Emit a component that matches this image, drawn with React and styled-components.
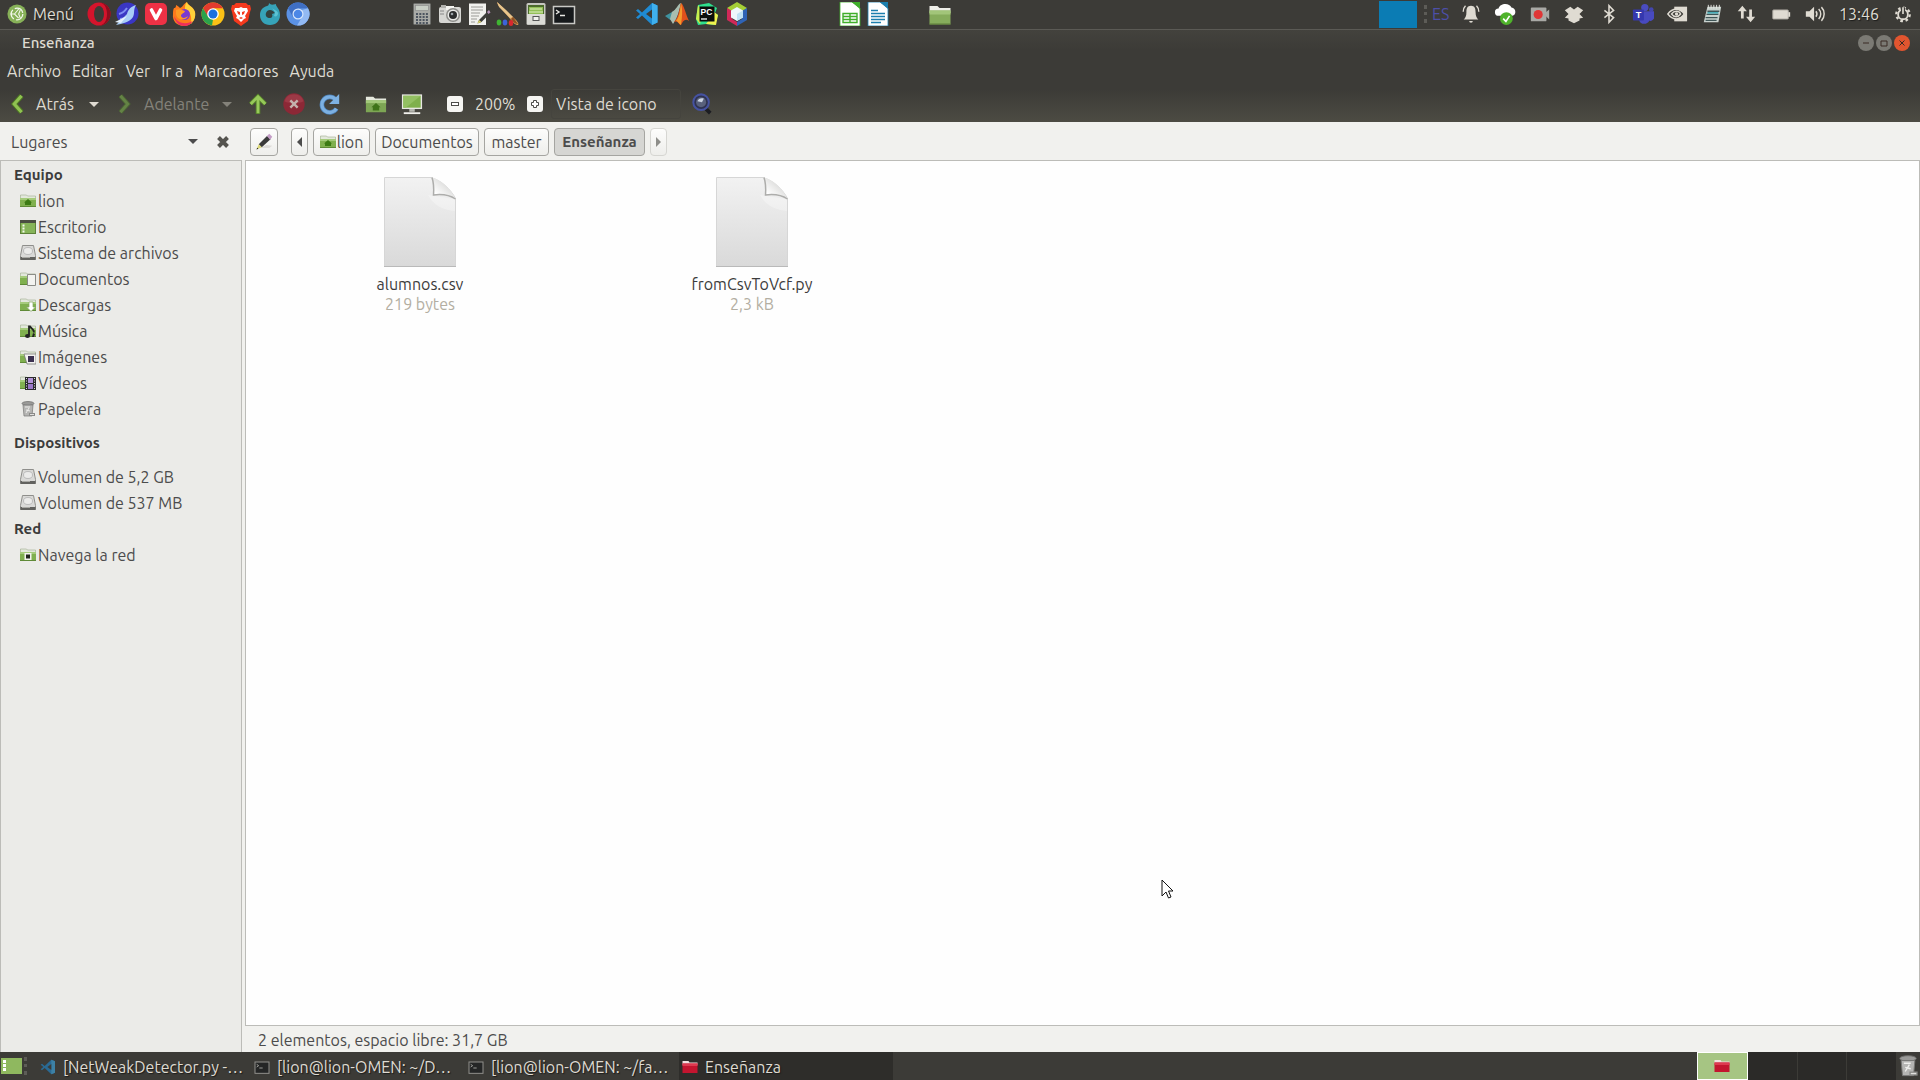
// App.jsx 파일 관리자 (Caja) 화면
import React from 'react'
import styled, { createGlobalStyle } from 'styled-components'

//icons: 상단 패널
const Opera = () => (
  <svg viewBox="0 0 24 24">
    <circle cx="12" cy="12" r="11.5" fill="#d4142c" />
    <path d="M12 .5a11.500 11.500 0 0 1 0 23c5 0 8-5 8-11.500S17 .5 12 .5z" fill="#8e0d1e" />
    <ellipse cx="12" cy="12" rx="5" ry="8" fill="#3c3b37" />
  </svg>
)
const SeaMonkey = () => (
  <svg viewBox="0 0 24 24">
    <circle cx="12.500" cy="11.500" r="11" fill="#3a36c4" />
    <path d="M4 12c4-1 6-3 8-6M5 17c5 0 9-3 12-8" stroke="#7f8df2" strokeWidth="2" fill="none" />
    <path d="M21 3c-4 1-8 4-9 9L1 23c6-1 14-3 17-8 2-4 0-7 3-12z" fill="#a9cdf6" />
    <path d="M0 20l12-6-6 7z" fill="#e4f0fd" />
  </svg>
)
const Vivaldi = () => (
  <svg viewBox="0 0 24 24">
    <rect x="1" y="1" width="22" height="22" rx="5" fill="#ee3145" />
    <path d="M7.500 8l4.500 8.500L16.500 8" stroke="#fff" strokeWidth="3.600" fill="none" strokeLinecap="round" strokeLinejoin="round" />
  </svg>
)
const Firefox = () => (
  <svg viewBox="0 0 24 24">
    <path d="M2 6c1 0 2 0 2-3 2 1 3 2 4 3 3-1 3-4 7-6 0 3 6 4 8 10 1 8-4 14-11 14S0 19 1 12c0-2 0-4 1-6z" fill="#ff7a1c" />
    <path d="M15 0c0 3 6 4 8 10 1 5-1 9-4 12 1-8-1-13-6-15 0-3 0-5 2-7z" fill="#ffd23a" />
    <path d="M2 14c1 6 5 10 10 10 4 0 7-2 9-5-5 3-15 4-19-5z" fill="#f0305a" />
    <circle cx="12.500" cy="12.500" r="5.500" fill="#7a3ad0" />
    <path d="M4 8c4-2 6 0 9 1-1 3-4 2-4 5 1 3 5 2 7 0-1 5-11 5-12-2z" fill="#ff9a24" />
  </svg>
)
const Chrome = () => (
  <svg viewBox="0 0 24 24">
    <circle cx="12" cy="12" r="11.500" fill="#fbc116" />
    <path d="M2 6.300A11.500 11.500 0 0 1 22 6.300H12L7 15z" fill="#e33b2e" />
    <path d="M2 6.300L7.300 15l4.700 2.500L11 23.500A11.500 11.500 0 0 1 2 6.300z" fill="#2ba24c" />
    <circle cx="12" cy="12" r="5.800" fill="#fff" />
    <circle cx="12" cy="12" r="4.500" fill="#1b6fe0" />
  </svg>
)
const Brave = () => (
  <svg viewBox="0 0 24 24">
    <path d="M7 1h10l2 2 2 0 1 4-1 3-2 9-7 5-7-5-2-9-1-3 1-4h2z" fill="#f5391d" />
    <path d="M6 6l4 0 2-1 2 1 4 0 1 3-3 5 1 2-2 1-3 3-3-3-2-1 1-2-3-5z" fill="#fff" />
    <path d="M8 9l3 1v3l-2-1zM16 9l-3 1v3l2-1zM10 16l2-1 2 1-2 1z" fill="#f5391d" />
  </svg>
)
const Waterfox = () => (
  <svg viewBox="0 0 24 24">
    <path d="M11 1c2 2 3 2 7 1-1 2 4 4 4 11 0 6-4 10-10 10S2 19 2 13c0-5 3-8 7-9 1 0 2-1 2-3z" fill="#36a3b8" />
    <path d="M8 11c1-3 4-4 7-2l2 2-3 1c1 2 0 4-2 4-3 0-5-2-4-5z" fill="#33423f" />
    <path d="M14 6c2 2 5 2 6 5 0 3-2 4-4 3l1-3c0-2-2-3-3-5z" fill="#5cc3d3" />
  </svg>
)
const Chromium = () => (
  <svg viewBox="0 0 24 24">
    <circle cx="12" cy="12" r="11.500" fill="#5b92e5" />
    <path d="M2 6.300A11.500 11.500 0 0 1 22 6.300H12L7 15z" fill="#3f6fc4" />
    <path d="M22 6.300A11.500 11.500 0 0 1 11 23.500l5-8.500V8z" fill="#92b9f3" />
    <circle cx="12" cy="12" r="5.500" fill="#d8e6fb" />
    <circle cx="12" cy="12" r="4.300" fill="#4c87e6" />
  </svg>
)
const Calculator = () => (
  <svg viewBox="0 0 24 24">
    <rect x="3.500" y="1.500" width="17" height="21" rx="1" fill="#a9aaa6" stroke="#6b6c69" />
    <rect x="5.500" y="3.500" width="13" height="5" fill="#c9cfc6" stroke="#888" strokeWidth=".6" />
    <path d="M6 12h12M6 15h12M6 18h12M6 21h12" stroke="#4d5560" strokeWidth="2" strokeDasharray="2 1.300" />
  </svg>
)
const Camera = () => (
  <svg viewBox="0 0 24 24">
    <rect x="1" y="5" width="22" height="16" rx="2" fill="#d6d6d3" />
    <rect x="3" y="3" width="5" height="3" fill="#b1b1ad" />
    <rect x="8" y="4" width="8" height="4" fill="#f3f3f0" />
    <circle cx="15" cy="13" r="7" fill="#8c8c89" />
    <circle cx="15" cy="13" r="5.500" fill="#e9e9e7" />
    <circle cx="15" cy="13" r="4" fill="#2b2d2e" />
    <circle cx="14" cy="12" r="1.300" fill="#9aa2a8" />
    <path d="M2 9h4M2 12h4" stroke="#888" />
  </svg>
)
const NotePad = () => (
  <svg viewBox="0 0 24 24">
    <rect x="2" y="1.500" width="17" height="21.500" fill="#f1f1ee" />
    <path d="M4 5h12M4 8h12M4 11h9M4 14h8M4 17h6M4 20h4" stroke="#9a9a96" />
    <path d="M22 8l1.500 3-9 9-4 1.500L12 18z" fill="#3d3d3b" />
    <path d="M12 18l2.500 2-4 1.500z" fill="#d8d36a" />
    <path d="M22 8l1.500 2.500-2 1.500-1.500-2z" fill="#b493b8" />
  </svg>
)
const Colors = () => (
  <svg viewBox="0 0 24 24">
    <path d="M2 0l18 17c3 3 4 5 3 6-2 0-5-2-7-5L3 3z" fill="#d99a54" />
    <path d="M2 0l9 8 7 7-3 1L4 5z" fill="#e9c58c" />
    <path d="M18 15l5 7c-3 0-5-2-7-5z" fill="#8e5124" />
    <ellipse cx="4" cy="20.500" rx="2.300" ry="3" fill="#3fb531" />
    <ellipse cx="10" cy="20.500" rx="2.300" ry="3" fill="#3d63d8" />
    <ellipse cx="16" cy="21" rx="2.300" ry="3" fill="#d8282e" />
  </svg>
)
const Cabinet = () => (
  <svg viewBox="0 0 24 24">
    <rect x="2.500" y="1" width="19" height="22" rx="1.500" fill="#c6c6c0" />
    <rect x="4" y="3" width="16" height="9" fill="#4c6a2c" />
    <rect x="5" y="5" width="14" height="7" fill="#92bf56" />
    <path d="M6 7h12M5 10h14" stroke="#dff0c0" />
    <rect x="3" y="12" width="18" height="10" fill="#dcdcd6" />
    <rect x="9" y="14.500" width="6" height="4" fill="#f3f3ef" stroke="#555" />
  </svg>
)
const Terminal = () => (
  <svg viewBox="0 0 24 24">
    <rect x="1.500" y="4.500" width="21" height="17" fill="#16191b" stroke="#c9c9c5" strokeWidth="1.500" />
    <path d="M4 8l3 2-3 2M8 13.500h5" stroke="#e8e8e4" strokeWidth="1.400" fill="none" />
  </svg>
)
const VsCode = () => (
  <svg viewBox="0 0 24 24">
    <path d="M17 1l5.500 2.500v17L17 23 7 13.500 3 17l-2-1.500L5 12 1 8.500 3 7l4 3.500z" fill="#1f8ad2" />
    <path d="M17 1l5.500 2.500v17L17 23z" fill="#3fb0ee" />
    <path d="M17 7.500v9L11 12z" fill="#3c3b37" />
  </svg>
)
const Matlab = () => (
  <svg viewBox="0 0 24 24">
    <path d="M0 14l7-4 4-2-4 11-3-2z" fill="#3f93a0" />
    <path d="M7 10C11 8 13 2 16 1c-2 8-3 14-8 21l-3-5z" fill="#a8bdb0" />
    <path d="M16 1c3 2 5 12 8 18-4-3-6 0-8 4-3-1-3-5-7-3 5-5 5-12 7-19z" fill="#e0501c" />
    <path d="M16 1c2 7 1 15 0 22-2-1-3-4-5-4 4-5 4-12 5-18z" fill="#f59a2c" />
  </svg>
)
const PyCharm = () => (
  <svg viewBox="0 0 24 24">
    <path d="M3 3l11-2 8 5-2 5 3 2-3 10-9-1-8 1-2-6z" fill="#2fe08e" />
    <path d="M19 10l4 3-2 10-10-1 3-4z" fill="#f0f24e" />
    <path d="M3 3L1 17l4 5 3-12z" fill="#c9ee4d" />
    <rect x="4.500" y="4.500" width="15" height="15" fill="#0b0d0c" />
    <text x="5.500" y="12.500" fontSize="8.500" fontWeight="700" fontFamily="Liberation Sans, sans-serif" fill="#fff">PC</text>
    <path d="M6 17h6" stroke="#fff" strokeWidth="1.300" />
  </svg>
)
const NetBeans = () => (
  <svg viewBox="0 0 24 24">
    <path d="M12 0l10 6-4 3-6-3-6 3-4-3z" fill="#a4cf36" />
    <path d="M2 6l5 3v8l5 3v4L2 18z" fill="#d02858" />
    <path d="M22 6l-5 3v8l-5 3v4l10-6z" fill="#2f63b5" />
    <path d="M12 5l6 3.500v7L12 19l-6-3.500v-7z" fill="#eef7fb" />
    <path d="M12 12l6-3.500v7L12 19z" fill="#bfe2f5" />
  </svg>
)
const OfficeDoc = ({ color, sheet }) => (
  <svg viewBox="0 0 24 24">
    <path d="M2 0h12l8 6v18H2z" fill="#fff" stroke={color} strokeWidth=".8" />
    <path d="M14 0h8v7z" fill={color} />
    {sheet ? (
      <path d="M5 11.500h14v9H5zM5 14.500h14M5 17.500h14M12 11.500v9" stroke={color} strokeWidth="1.400" fill="none" />
    ) : (
      <path d="M5 8.500h7M5 11.500h14M5 14.500h14M5 17.500h14M5 20.500h10" stroke={color} strokeWidth="1.300" />
    )}
  </svg>
)
const PanelFolder = () => (
  <svg viewBox="0 0 24 24">
    <path d="M1.500 4h8l2 2h11v5h-21z" fill="#efefe9" />
    <path d="M1.500 8.500h21v14h-21z" fill="#86ac5c" />
    <path d="M1.500 8.500h21v4h-21z" fill="#a2c57a" />
    <path d="M1.500 21.500h21v1h-21z" fill="#5c7d38" />
  </svg>
)
const MateLogo = () => (
  <svg viewBox="0 0 24 24">
    <circle cx="12" cy="12" r="11.500" fill="#87b158" />
    <circle cx="12" cy="12" r="7" fill="none" stroke="#f4f8ee" strokeWidth="1.500" strokeDasharray="12 2.700" />
    <path d="M4 12h5l5 5M9 12l5-6M16 7l-2 5 2 5" stroke="#f4f8ee" strokeWidth="1.300" fill="none" />
  </svg>
)

//icons: 트레이
const Bell = () => (
  <svg viewBox="0 0 24 24" fill="#dfdbd2">
    <path d="M12 3c4 0 5 3 5 7 0 4 1 6 3 8H4c2-2 3-4 3-8 0-4 1-7 5-7z" />
    <path d="M10 19.500h4a2 2 0 0 1-4 0z" />
    <path d="M6 3C4 5 3.500 7 3.500 9.500M18 3c2 2 2.500 4 2.500 6.500" stroke="#dfdbd2" strokeWidth="1.500" fill="none" />
  </svg>
)
const Cloud = () => (
  <svg viewBox="0 0 24 24">
    <path d="M5 14a4 4 0 0 1 0-8c1-6 12-7 14-1 5 0 6 8 1 9z" fill="#fff" />
    <circle cx="13.500" cy="17" r="7" fill="#4fb32b" />
    <path d="M10 17l3 3 4-6" stroke="#fff" strokeWidth="1.800" fill="none" />
  </svg>
)
const Recorder = () => (
  <svg viewBox="0 0 24 24">
    <rect x="2" y="5" width="17" height="15" rx="1" fill="#a9a9a5" />
    <path d="M16 12l6-5v11z" fill="#a9a9a5" />
    <circle cx="10" cy="12.500" r="5" fill="#e03636" />
  </svg>
)
const Dropbox = () => (
  <svg viewBox="0 0 24 24" fill="#dfdbd2">
    <path d="M8 4l4 3 4-3 6 4-4 4 4 4-4 1v2l-6 3-6-3v-2l-4-1 4-4-4-4z" />
  </svg>
)
const Bluetooth = () => (
  <svg viewBox="0 0 24 24">
    <path d="M7 8l10 8-5 5V3l5 5-10 8" stroke="#dfdbd2" strokeWidth="1.700" fill="none" />
  </svg>
)
const Teams = () => (
  <svg viewBox="0 0 24 24">
    <circle cx="14" cy="5" r="4" fill="#4a4cc0" />
    <circle cx="21" cy="7" r="2.500" fill="#4346ae" />
    <path d="M8 9h16v8c-2 3-4 3-5 2-2 5-10 5-11 0z" fill="#484abf" />
    <rect x="1" y="7" width="12" height="12" rx="1" fill="#3538ae" />
    <text x="4" y="16.500" fontSize="10" fontWeight="700" fontFamily="Liberation Sans, sans-serif" fill="#fff">T</text>
  </svg>
)
const Nvidia = () => (
  <svg viewBox="0 0 24 24">
    <path d="M9 4h14v16H9z" fill="#dfdbd2" />
    <path d="M2 12c5-7 13-7 18 0-4 6-12 8-18 0z" fill="#3c3b37" stroke="#dfdbd2" strokeWidth="1.500" />
    <path d="M6 12c3-4 8-4 10 0-3 4-7 4-10 0z" fill="none" stroke="#dfdbd2" strokeWidth="1.500" />
    <circle cx="11.500" cy="12" r="1.800" fill="#dfdbd2" />
  </svg>
)
const Notes = () => (
  <svg viewBox="0 0 24 24">
    <path d="M7 4h15l-3 17H3z" fill="#c9d2ce" />
    <path d="M7 9h13M6 12.500h13M5 16h13M5 19h12" stroke="#3f5556" strokeWidth="1.400" />
    <path d="M7 10.700h12" stroke="#3ea9b6" strokeWidth="1.600" />
    <path d="M8 2v4M11 2v4M14 2v4M17 2v4M20 2v4" stroke="#e8e8e4" />
  </svg>
)
const NetArrows = () => (
  <svg viewBox="0 0 24 24" fill="#dfdbd2">
    <path d="M8 3l5 6H9.500v8h-3V9H3zM17 21l-5-6h3.500V7h3v8H22z" />
  </svg>
)
const Battery = () => (
  <svg viewBox="0 0 24 24">
    <rect x="3" y="7.500" width="17" height="10" rx="1" fill="#dfdbd2" stroke="#a5a29a" />
    <rect x="20" y="10" width="2" height="5" fill="#dfdbd2" />
  </svg>
)
const Sound = () => (
  <svg viewBox="0 0 24 24">
    <path d="M2 9h4l5-5v16l-5-5H2z" fill="#dfdbd2" />
    <path d="M13 9c1.500 2 1.500 4 0 6M16 6.500c3 3 3 8 0 11M19 4.500c4 4 4 11 0 15" stroke="#dfdbd2" strokeWidth="1.600" fill="none" />
  </svg>
)
const Gear = () => (
  <svg viewBox="0 0 24 24">
    <circle cx="12" cy="12.500" r="9" fill="none" stroke="#dfdbd2" strokeWidth="3" strokeDasharray="3.500 3.569" />
    <circle cx="12" cy="12.500" r="6.500" fill="none" stroke="#dfdbd2" strokeWidth="2.400" />
    <path d="M12 3v9" stroke="#3c3b37" strokeWidth="5.500" />
    <path d="M12 3v9" stroke="#dfdbd2" strokeWidth="2.200" />
  </svg>
)

//icons: 도구 모음
const ArrowLeft = () => (
  <svg viewBox="0 0 24 24">
    <path d="M17 3L9 12l8 9" stroke="#4d7523" strokeWidth="5.500" fill="none" />
    <path d="M17 3L9 12l8 9" stroke="#8fc251" strokeWidth="3.500" fill="none" />
  </svg>
)
const ArrowRight = () => (
  <svg viewBox="0 0 24 24">
    <path d="M7 3l8 9-8 9" stroke="#4b6434" strokeWidth="5" fill="none" />
    <path d="M7 3l8 9-8 9" stroke="#648345" strokeWidth="3" fill="none" />
  </svg>
)
const ArrowUp = () => (
  <svg viewBox="0 0 24 24">
    <path d="M4 12L12 4l8 8M12 5v18" stroke="#56822a" strokeWidth="5" fill="none" />
    <path d="M4 12L12 4l8 8M12 5v17" stroke="#97c95a" strokeWidth="3" fill="none" />
  </svg>
)
const Stop = () => (
  <svg viewBox="0 0 24 24">
    <circle cx="12" cy="12" r="11.700" fill="#8c2836" />
    <path d="M1.500 9a11 11 0 0 1 21 0c-6 3-15 3-21 0z" fill="#9c3946" />
    <path d="M8 8l8 8M16 8l-8 8" stroke="#c4b1ad" strokeWidth="2.600" />
  </svg>
)
const Reload = () => (
  <svg viewBox="0 0 24 24">
    <path d="M19 17a8.500 8.500 0 1 1-1-10" stroke="#4c81b8" strokeWidth="5" fill="none" />
    <path d="M22 1v11H11z" fill="#7db1e2" />
    <path d="M19 17a8.500 8.500 0 1 1-1-10" stroke="#7db1e2" strokeWidth="3.500" fill="none" />
  </svg>
)
const HomeFolder = () => (
  <svg viewBox="0 0 24 24">
    <path d="M1 4h8l2 2h12v6H1z" fill="#e6e9de" />
    <path d="M1 8h22v13H1z" fill="#7da654" />
    <path d="M1 8h22v3H1z" fill="#a3c97a" />
    <path d="M12 11l5 4.500h-1.500V19h-7v-3.500H7z" fill="#3f7319" />
  </svg>
)
const Computer = () => (
  <svg viewBox="0 0 24 24">
    <rect x="1" y="1.500" width="22" height="16" fill="#e8e8e2" />
    <rect x="2.500" y="3" width="19" height="13" fill="#7fb04c" />
    <path d="M2.500 3h19L5 16H2.500z" fill="#93c062" />
    <path d="M9 17.500h6v3H9z" fill="#b9bab3" />
    <path d="M3 22h18" stroke="#f1f1ec" strokeWidth="2" />
  </svg>
)
const ZoomMark = ({ plus }) => (
  <svg viewBox="0 0 16 16">
    <rect width="16" height="16" rx="3" fill="#f5f5f2" />
    {plus ? (
      <path d="M6.500 4.500h3v2h2v3h-2v2h-3v-2h-2v-3h2z" fill="#fff" stroke="#4a4a47" />
    ) : (
      <rect x="4.500" y="6.500" width="7" height="3" fill="#fff" stroke="#4a4a47" />
    )}
  </svg>
)
const Magnifier = () => (
  <svg viewBox="0 0 24 24">
    <path d="M15 16l6 6" stroke="#1c1d22" strokeWidth="4" />
    <circle cx="11" cy="10" r="8.500" fill="#2f3350" stroke="#4552a0" strokeWidth="2.200" />
    <circle cx="11" cy="10" r="5.500" fill="#59617c" />
    <path d="M7 9c1-3 4-4 7-3l-2 4z" fill="#ccd4e4" />
  </svg>
)
const Pencil = () => (
  <svg viewBox="0 0 24 24">
    <path d="M7 20l12 0 4-3-8-1z" fill="#dddbd8" />
    <path d="M16 4l5 4L9 19l-4-4z" fill="#3a3a3a" />
    <path d="M16 4l3-3 4 4-3 4z" fill="#c49cc6" />
    <path d="M5 15l4 4-7 3z" fill="#dcd876" />
    <path d="M3 19.500l1.500 1.500L2 22z" fill="#222" />
  </svg>
)
const CloseMark = () => (
  <svg viewBox="0 0 14 14">
    <path d="M2.500 2.500l9 9M11.500 2.500l-9 9" stroke="#55544f" strokeWidth="4" />
  </svg>
)

//icons: 16px 폴더, 디스크
const folderMarks = {
  home: <path d="M8 6l4 3.500h-1V12H5V9.500H4z" fill="#3c7a14" />,
  documents: <path d="M7.500 3.500h8v11h-8z" fill="#f3f3f0" stroke="#8b8c87" />,
  downloads: <path d="M9 5h4v5h2.500L11 14.500 6.500 10H9z" fill="#fff" stroke="#84a562" strokeWidth=".7" />,
  music: (
    <>
      <path d="M9 12.500V3.500l1 0c1 2 4 2 4 6" stroke="#222" strokeWidth="1.800" fill="none" />
      <ellipse cx="7.500" cy="13" rx="2.500" ry="2" fill="#222" />
      <path d="M13 10l2 1-1 3-2 0z" fill="#222" />
    </>
  ),
  pictures: (
    <>
      <path d="M4 5h12v10H7z" fill="#f3f3f0" stroke="#6c6c69" strokeWidth=".7" />
      <rect x="8" y="7" width="6" height="6" fill="#3b3150" />
    </>
  ),
  videos: (
    <>
      <rect x="5" y="2" width="11" height="13" fill="#2b2b2e" />
      <rect x="8" y="3" width="5" height="5" fill="#b293d8" />
      <rect x="8" y="9" width="5" height="5" fill="#9a78c8" />
      <path d="M6.500 3v12M14.500 3v12" stroke="#ddd" strokeDasharray="1 1.500" />
    </>
  ),
  network: (
    <>
      <rect x="4.500" y="6" width="7" height="7" fill="#f3f3ef" />
      <rect x="6" y="7.500" width="4" height="4" fill="#20241c" />
    </>
  ),
}
const Folder16 = ({ mark }) => (
  <svg viewBox="0 0 16 16">
    <path d="M.5 2h6l1 1h8v4H.5z" fill="#e3e8dc" stroke="#9dab8d" strokeWidth=".6" />
    <path d="M0 5h16v9H0z" fill="#80b04f" />
    <path d="M0 5h16v2H0z" fill="#a5cb7c" />
    <path d="M0 13.500h16" stroke="#5f8a37" />
    {folderMarks[mark]}
  </svg>
)
const Desktop16 = () => (
  <svg viewBox="0 0 16 16">
    <rect x=".5" y="1.500" width="15" height="13" fill="#86b459" stroke="#5c8138" />
    <path d="M0 1h16v3H0z" fill="#4b4e42" />
    <path d="M3.500 5.500v8" stroke="#f3f7ec" strokeWidth="2" strokeDasharray="2 1" />
  </svg>
)
const Drive16 = () => (
  <svg viewBox="0 0 16 16">
    <path d="M2.500.5h11l2 10v4H.5v-4z" fill="#d9d9d7" stroke="#8e8e8b" />
    <ellipse cx="8" cy="6" rx="4.500" ry="3.500" fill="#ebebea" stroke="#bababa" />
    <path d="M.5 12h15v3H.5z" fill="#62625f" />
    <path d="M2 12.500h8" stroke="#a8a8a4" />
  </svg>
)
const Trash16 = () => (
  <svg viewBox="0 0 16 16">
    <ellipse cx="8" cy="2.500" rx="6" ry="2" fill="#9a9a98" stroke="#6d6d6b" strokeWidth=".7" />
    <path d="M3 4h10l-1 11H4z" fill="#b5b5b3" stroke="#777775" strokeWidth=".7" />
    <path d="M5 6l5 0M6 9l4 1M9 7l-3 5" stroke="#eeeeec" />
    <path d="M9 12h6v3H9z" fill="#8a8a88" />
    <path d="M10 13.500h4" stroke="#e0e0de" />
  </svg>
)
const RedFolder = () => (
  <svg viewBox="0 0 16 16">
    <path d="M.5 2h6l1 1.500h8V6H.5z" fill="#f2dfe0" />
    <path d="M.5 4.500h15V14H.5z" fill="#c3152f" />
    <path d="M.5 4.500h15v2.500H.5z" fill="#dd3a50" />
  </svg>
)
const FilePage = () => (
  <svg width="72" height="90" viewBox="0 0 72 90">
    <defs>
      <linearGradient id="paper" x1="0" y1="0" x2="0" y2="1">
        <stop offset="0" stopColor="#f2f2f2" />
        <stop offset="1" stopColor="#d9d9d9" />
      </linearGradient>
      <linearGradient id="fold" x1="0" y1="1" x2="1" y2="0">
        <stop offset=".2" stopColor="#fff" />
        <stop offset="1" stopColor="#c4c4c2" />
      </linearGradient>
    </defs>
    <path d="M.5.5H47c10 3 20 12 24.500 21v68H.5z" fill="url(#paper)" stroke="#d6d6d6" />
    <path d="M44 18l27 4v12c-12-1-22-6-27-16z" fill="#fff" opacity=".3" />
    <path d="M48 .5c2 6 2 11 1.500 17.500 8-1 16 0 22 4C67 12 58 3 48 .5z" fill="url(#fold)" />
    <path d="M48 .5c2 6 2 11 1.500 17.500 8-1 16 0 22 4" fill="none" stroke="#adadab" strokeWidth="1.500" />
    <path d="M0 89.500h72" stroke="#b9b9b9" />
  </svg>
)

//data
const browsers = [Opera, SeaMonkey, Vivaldi, Firefox, Chrome, Brave, Waterfox, Chromium]
const tools = [Calculator, Camera, NotePad, Colors, Cabinet, Terminal]
const editors = [VsCode, Matlab, PyCharm, NetBeans]
const tray = [Bell, Cloud, Recorder, Dropbox, Bluetooth, Teams, Nvidia, Notes, NetArrows, Battery, Sound]
const menus = ['Archivo', 'Editar', 'Ver', 'Ir a', 'Marcadores', 'Ayuda']
const places = [
  { name: 'lion', icon: <Folder16 mark="home" /> },
  { name: 'Escritorio', icon: <Desktop16 /> },
  { name: 'Sistema de archivos', icon: <Drive16 /> },
  { name: 'Documentos', icon: <Folder16 mark="documents" /> },
  { name: 'Descargas', icon: <Folder16 mark="downloads" /> },
  { name: 'Música', icon: <Folder16 mark="music" /> },
  { name: 'Imágenes', icon: <Folder16 mark="pictures" /> },
  { name: 'Vídeos', icon: <Folder16 mark="videos" /> },
  { name: 'Papelera', icon: <Trash16 /> },
]
const devices = ['Volumen de 5,2 GB', 'Volumen de 537 MB']
const files = [
  { name: 'alumnos.csv', size: '219 bytes' },
  { name: 'fromCsvToVcf.py', size: '2,3 kB' },
]
const tasks = [
  { title: '[NetWeakDetector.py -…', icon: <VsCode />, dim: true },
  { title: '[lion@lion-OMEN: ~/D…', icon: <Terminal />, dim: true },
  { title: '[lion@lion-OMEN: ~/fa…', icon: <Terminal />, dim: true },
  { title: 'Enseñanza', icon: <RedFolder />, active: true },
]

function Launchers({ icons, width, gap }) {
  return (
    <LauncherGroup $width={width} $gap={gap}>
      {icons.map((Icon) => (
        <IconButton key={Icon.name} aria-label={Icon.name} $size={24}><Icon /></IconButton>
      ))}
    </LauncherGroup>
  )
}

function Place({ icon, name }) {
  return (
    <PlaceRow href="#"><Glyph $size={16}>{icon}</Glyph>{name}</PlaceRow>
  )
}

function App() {
  return (
    <>
      <GlobalStyle />
      <Screen>
        <TopPanel>
          <MenuButton><Glyph $size={20}><MateLogo /></Glyph>Menú</MenuButton>
          <Launchers icons={browsers} width={223} gap={12} />
          <Launchers icons={tools} width={166} gap={100} />
          <Launchers icons={editors} width={114} gap={59} />
          <LauncherGroup $width={52} $gap={89}>
            <IconButton aria-label="Calc" $size={24}><OfficeDoc color="#3fae2a" sheet /></IconButton>
            <IconButton aria-label="Writer" $size={24}><OfficeDoc color="#1c7fae" /></IconButton>
          </LauncherGroup>
          <LauncherGroup $width={24} $gap={38}>
            <IconButton aria-label="Carpeta" $size={24}><PanelFolder /></IconButton>
          </LauncherGroup>
          <Tray>
            <Monitor />
            <Grip />
            <Language>ES</Language>
            <TrayIcons>
              {tray.map((Icon) => (
                <IconButton key={Icon.name} aria-label={Icon.name} $size={22}><Icon /></IconButton>
              ))}
            </TrayIcons>
            <Clock>13:46</Clock>
            <IconButton aria-label="Sesión" $size={18}><Gear /></IconButton>
          </Tray>
        </TopPanel>

        <WindowHead>
          <TitleBar>
            <Title>Enseñanza</Title>
            <WindowButton aria-label="Minimizar"><svg viewBox="0 0 16 16"><path d="M5 8h6" /></svg></WindowButton>
            <WindowButton aria-label="Maximizar"><svg viewBox="0 0 16 16"><path d="M5 6h6v5H5z" /></svg></WindowButton>
            <WindowButton aria-label="Cerrar" $close><svg viewBox="0 0 16 16"><path d="M5.500 5.500l5 5M10.500 5.500l-5 5" /></svg></WindowButton>
          </TitleBar>
          <MenuBar>
            {menus.map((menu) => <MenuItem key={menu}>{menu}</MenuItem>)}
          </MenuBar>
          <ToolBar>
            <ToolButton $width={108}><Glyph $size={22}><ArrowLeft /></Glyph><span>Atrás</span><Caret /></ToolButton>
            <ToolButton $width={133} disabled><Glyph $size={22}><ArrowRight /></Glyph><span>Adelante</span><Caret /></ToolButton>
            <ToolIcons $gap={14}>
              <IconButton aria-label="Subir" $size={22}><ArrowUp /></IconButton>
              <IconButton aria-label="Detener" $size={22}><Stop /></IconButton>
              <IconButton aria-label="Recargar" $size={22}><Reload /></IconButton>
            </ToolIcons>
            <ToolIcons $gap={14}>
              <IconButton aria-label="Carpeta personal" $size={22}><HomeFolder /></IconButton>
              <IconButton aria-label="Equipo" $size={22}><Computer /></IconButton>
            </ToolIcons>
            <ToolIcons $gap={12}>
              <IconButton aria-label="Reducir" $size={16}><ZoomMark /></IconButton>
              <ZoomLevel>200%</ZoomLevel>
              <IconButton aria-label="Ampliar" $size={16}><ZoomMark plus /></IconButton>
            </ToolIcons>
            <ViewSelect aria-label="Vista" defaultValue="icono">
              <option value="icono">Vista de icono</option>
            </ViewSelect>
            <IconButton aria-label="Buscar" $size={22}><Magnifier /></IconButton>
          </ToolBar>
        </WindowHead>

        <Body>
          <SideColumn>
            <SideHead>
              <SideTitle>Lugares<Caret $dark /></SideTitle>
              <IconButton aria-label="Cerrar panel" $size={14}><CloseMark /></IconButton>
            </SideHead>
            <SideList>
              <SideGroup>Equipo</SideGroup>
              {places.map((place) => <Place key={place.name} {...place} />)}
              <SideGroup $spaced>Dispositivos</SideGroup>
              {devices.map((name) => <Place key={name} name={name} icon={<Drive16 />} />)}
              <SideGroup>Red</SideGroup>
              <Place name="Navega la red" icon={<Folder16 mark="network" />} />
            </SideList>
          </SideColumn>

          <MainColumn>
            <PathBar>
              <PathButton aria-label="Editar ruta" $width={28}><Glyph $size={18}><Pencil /></Glyph></PathButton>
              <PathList>
                <PathButton aria-label="Anterior" $width={17}><Pointer $left /></PathButton>
                <PathButton $width={57}><Glyph $size={16}><Folder16 mark="home" /></Glyph>lion</PathButton>
                <PathButton $width={104}>Documentos</PathButton>
                <PathButton $width={65}>master</PathButton>
                <PathButton $width={91} $active>Enseñanza</PathButton>
                <PathButton aria-label="Siguiente" $width={17} disabled><Pointer /></PathButton>
              </PathList>
            </PathBar>
            <FileArea>
              {files.map((file) => (
                <FileItem key={file.name}>
                  <FilePage />
                  <FileName>{file.name}</FileName>
                  <FileSize>{file.size}</FileSize>
                </FileItem>
              ))}
            </FileArea>
            <StatusBar>2 elementos, espacio libre: 31,7 GB</StatusBar>
          </MainColumn>
        </Body>

        <BottomPanel>
          <IconButton aria-label="Mostrar escritorio" $size={22}><svg viewBox="0 0 22 22"><rect x="1" y="3" width="21" height="16" fill="#8fb85f" /><path d="M4.500 5v11" stroke="#fff" strokeWidth="3" strokeDasharray="3 1" /></svg></IconButton>
          <Grip />
          <TaskList>
            {tasks.map((task) => (
              <Task key={task.title} $active={task.active}>
                <Glyph $size={16} $dim={task.dim}>{task.icon}</Glyph>
                {task.title}
              </Task>
            ))}
          </TaskList>
          <Workspaces>
            <Workspace aria-label="Área 1" $current><Glyph $size={16}><RedFolder /></Glyph></Workspace>
            <Workspace aria-label="Área 2" />
            <Workspace aria-label="Área 3" />
            <Workspace aria-label="Área 4" />
          </Workspaces>
          <IconButton aria-label="Papelera" $size={22}><Trash16 /></IconButton>
        </BottomPanel>

        <Cursor viewBox="0 0 13 20"><path d="M1 1v16l4-4 2.500 6 2.500-1-2.500-6H12z" fill="#fff" stroke="#111" /></Cursor>
      </Screen>
    </>
  )
}

const GlobalStyle = createGlobalStyle`
* { box-sizing: border-box; }

body {
  margin: 0;
  background: #f2f1f0;
  font-family: Ubuntu, "Noto Sans", sans-serif;
  font-size: 16px;
  line-height: 20px;
  color: #4c4c4c;
}

button, select {
  font: inherit;
  color: inherit;
  border: 0;
  padding: 0;
  margin: 0;
  background: none;
}

svg { display: block; }
`;

const Screen = styled.div`
display: flex;
flex-direction: column;
min-height: 100vh;
`;

const Glyph = styled.span`
flex: none;
width: ${(p) => p.$size}px;
height: ${(p) => p.$size}px;
opacity: ${(p) => (p.$dim ? 0.6 : 1)};
`;

const IconButton = styled.button`
flex: none;
width: ${(p) => p.$size}px;
height: ${(p) => p.$size}px;
`;

const TopPanel = styled.header`
display: flex;
align-items: center;
height: 29px;
padding: 0 8px 1px 7px;
background: #3c3b37;
color: #dfdbd2;
text-shadow: 1px 1px 1px #1c1c1a;
`;

const MenuButton = styled.button`
display: flex;
align-items: center;
gap: 6px;
width: 68px;
white-space: nowrap;
text-shadow: inherit;
`;

const LauncherGroup = styled.div`
display: flex;
justify-content: space-between;
width: ${(p) => p.$width}px;
margin-left: ${(p) => p.$gap}px;
`;

const Tray = styled.div`
display: flex;
align-items: center;
margin-left: auto;
`;

const Monitor = styled.div`
width: 38px;
height: 27px;
margin-right: 5px;
background: #0b7cb4;
`;

const Grip = styled.div`
width: 6px;
height: 18px;
margin: 0 2px;
border-left: 3px dotted #5d5c57;
`;

const Language = styled.span`
width: 28px;
color: #4d4fa8;
text-shadow: none;
`;

const TrayIcons = styled.div`
display: flex;
justify-content: space-between;
width: 366px;
`;

const Clock = styled.span`
width: 42px;
margin: 0 13px;
`;

const WindowHead = styled.div`
border-top: 1px solid #5b5a55;
background: linear-gradient(#43423d 0, #3c3b37 20px, #3c3b37 60px, #4c4b43 100%);
color: #dfdbd2;
`;

const TitleBar = styled.div`
display: flex;
align-items: center;
gap: 2px;
height: 26px;
padding: 0 10px 0 22px;
`;

const Title = styled.h1`
flex: 1;
margin: 0;
font-size: 15px;
font-weight: 500;
`;

const WindowButton = styled.button`
width: 16px;
height: 16px;
border-radius: 50%;
background: ${(p) => (p.$close ? '#e2552f' : '#7b7a74')};
stroke: #3a2a24;
fill: none;
`;

const MenuBar = styled.nav`
display: flex;
gap: 11px;
height: 30px;
padding-left: 7px;
`;

const MenuItem = styled.button`
white-space: nowrap;
`;

const ToolBar = styled.div`
display: flex;
align-items: center;
height: 36px;
padding: 0 6px;
`;

const ToolButton = styled.button`
display: flex;
align-items: center;
gap: 8px;
width: ${(p) => p.$width}px;
color: ${(p) => (p.disabled ? '#84827a' : '#dfdbd2')};

& > span:nth-child(2) { flex: 1; text-align: left; }
& > i { margin-right: 15px; }
`;

const Caret = styled.i`
border: 5px solid transparent;
border-bottom-width: 0;
border-top-color: ${(p) => (p.$dark ? '#4c4c4c' : 'currentColor')};
`;

const ToolIcons = styled.div`
display: flex;
align-items: center;
gap: ${(p) => p.$gap}px;
margin-right: 24px;

&:nth-child(5) { margin-right: 8px; }
`;

const ZoomLevel = styled.span`
width: 40px;
text-align: center;
`;

const ViewSelect = styled.select`
width: 130px;
height: 30px;
padding-left: 4px;
margin-right: 10px;
appearance: none;
border: 1px solid #45443e;
border-radius: 3px;
`;

const Body = styled.div`
flex: 1;
display: flex;
background: #f1f1ee;
`;

const SideColumn = styled.aside`
display: flex;
flex-direction: column;
width: 242px;
margin-right: 3px;
`;

const SideHead = styled.div`
display: flex;
align-items: center;
gap: 18px;
height: 38px;
padding: 1px 12px 0 11px;
`;

const SideTitle = styled.button`
flex: 1;
display: flex;
align-items: center;
justify-content: space-between;
`;

const SideList = styled.div`
flex: 1;
padding-top: 1px;
border: 1px solid #bcbcb8;
border-bottom: 0;
background: #ebebe8;
`;

const SideGroup = styled.h2`
margin: ${(p) => (p.$spaced ? '8px 0' : '0')};
padding-left: 13px;
font-size: 15px;
line-height: 26px;
color: #3c3c3c;
`;

const PlaceRow = styled.a`
display: flex;
align-items: center;
gap: 2px;
padding-left: 19px;
line-height: 26px;
color: inherit;
text-decoration: none;
`;

const MainColumn = styled.main`
flex: 1;
display: flex;
flex-direction: column;
`;

const PathBar = styled.div`
display: flex;
align-items: center;
gap: 13px;
height: 38px;
padding: 1px 0 0 5px;
`;

const PathList = styled.nav`
display: flex;
gap: 5px;
`;

const PathButton = styled.button`
display: flex;
align-items: center;
justify-content: center;
gap: 1px;
width: ${(p) => p.$width}px;
height: 28px;
border: 1px solid ${(p) => (p.disabled ? '#d6d6d2' : '#a5a5a1')};
border-radius: 4px;
background: ${(p) => (p.$active ? '#d6d6d3' : 'linear-gradient(#fdfdfc, #eeeeeb)')};
font-size: ${(p) => (p.$active ? 15 : 16)}px;
font-weight: ${(p) => (p.$active ? 700 : 400)};
color: ${(p) => (p.disabled ? '#8e8e8a' : '#4c4c4c')};
`;

const Pointer = styled.i`
border: 5px solid transparent;
border-${(p) => (p.$left ? 'left' : 'right')}-width: 0;
border-${(p) => (p.$left ? 'right' : 'left')}-color: currentColor;
`;

const FileArea = styled.section`
flex: 1;
display: flex;
align-items: flex-start;
padding: 16px 8px;
border: 1px solid #bcbcb8;
background: #fefefe;
`;

const FileItem = styled.div`
display: flex;
flex-direction: column;
align-items: center;
width: 332px;
`;

const FileName = styled.span`
margin-top: 7px;
color: #3c3c3c;
`;

const FileSize = styled.span`
color: #b3aea2;
`;

const StatusBar = styled.footer`
height: 26px;
padding: 4px 13px 0;
`;

const BottomPanel = styled.footer`
display: flex;
align-items: center;
height: 28px;
padding-right: 1px;
background: #3c3b37;
color: #dfdbd2;
text-shadow: 1px 1px 1px #1c1c1a;
`;

const TaskList = styled.div`
flex: 1;
display: flex;
margin-left: 5px;
`;

const Task = styled.button`
display: flex;
align-items: center;
gap: 7px;
width: 214px;
height: 28px;
padding: 1px 0 0 3px;
white-space: nowrap;
text-shadow: inherit;
background: ${(p) => (p.$active ? '#2e2d2a' : 'none')};
`;

const Workspaces = styled.div`
display: flex;
width: 200px;
background: #2b2a28;
`;

const Workspace = styled.button`
flex: 1;
display: flex;
align-items: center;
justify-content: center;
height: 28px;
border: ${(p) => (p.$current ? '1px solid #fff' : '0')};
border-right: 1px solid ${(p) => (p.$current ? '#fff' : '#3c3b37')};
background: ${(p) => (p.$current ? '#a6c583' : 'none')};
`;

const Cursor = styled.svg`
position: fixed;
left: 1161px;
top: 879px;
width: 13px;
height: 20px;
`;


export default App;
